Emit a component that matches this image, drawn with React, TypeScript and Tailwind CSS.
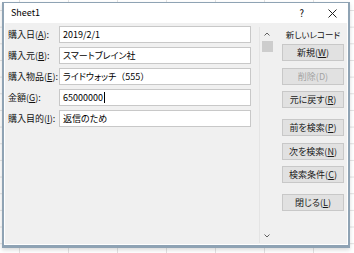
import React from "react";

const font = {
  fontFamily: '"Noto Sans CJK JP", "Noto Sans", sans-serif',
  fontFeatureSettings: '"palt"',
};

type Field = { label: string; key: string; value: React.ReactNode; caret?: boolean };

const fields: Field[] = [
  { label: "購入日", key: "A", value: "2019/2/1" },
  { label: "購入元", key: "B", value: "スマートブレイン社" },
  {
    label: "購入物品",
    key: "E",
    value: (
      <>
        ライドウォッチ
        <span className="[font-feature-settings:normal]">（555）</span>
      </>
    ),
  },
  { label: "金額", key: "G", value: "65000000", caret: true },
  { label: "購入目的", key: "I", value: "返信のため" },
];

function Btn({
  label,
  k,
  disabled,
  className,
}: {
  label: string;
  k: string;
  disabled?: boolean;
  className?: string;
}) {
  return (
    <div
      className={`flex h-[17px] w-[62px] items-center justify-center whitespace-nowrap border border-[#c8c8c8] bg-[#e1e1e1] text-[9px] leading-none ${
        disabled ? "text-[#a3a3a3]" : "text-[#1a1a1a]"
      } ${className ?? ""}`}
    >
      {label}(
      {disabled ? k : <span className="underline underline-offset-1">{k}</span>})
    </div>
  );
}

export default function App() {
  return (
    <div
      className="h-[253px] w-[354px] overflow-hidden bg-white bg-[image:linear-gradient(to_right,#e2e2e2_1px,transparent_1px),linear-gradient(to_bottom,#e2e2e2_1px,transparent_1px)] bg-[length:49px_16.67px] bg-[position:19px_10px] pt-[2px] pl-[2px]"
      style={font}
    >
      <div className="h-[246px] w-[348px] border-t border-r-2 border-b-[3px] border-l-2 border-[#8fa3b4] shadow-[0_2px_4px_rgba(0,0,0,0.15)]">
        <div className="flex h-full flex-col border-r border-b border-l border-white">
          {/* title bar */}
          <div className="flex h-[20px] items-center bg-white pl-[6px] text-[9px] text-black">
            <span>Sheet1</span>
            <span className="ml-auto mr-[24px] text-[9.5px]">?</span>
            <svg width="9" height="9" viewBox="0 0 9 9" className="mr-[10px]">
              <path d="M0.5 0.5 L8.5 8.5 M8.5 0.5 L0.5 8.5" stroke="#222" strokeWidth="1" />
            </svg>
          </div>

          {/* body */}
          <div className="flex flex-1 bg-[#f0f0f0] pl-[3px]">
            <div className="flex flex-col gap-[4px] pt-[3px]">
              {fields.map((f) => (
                <div key={f.key} className="flex h-[17px] items-center">
                  <div className="w-[51px] shrink-0 whitespace-nowrap text-[9px] text-[#111]">
                    {f.label}(<span className="underline underline-offset-1">{f.key}</span>):
                  </div>
                  <div className="flex h-[17px] w-[192px] items-center whitespace-nowrap border border-[#c8c8c8] bg-white pl-[3px] text-[9px] text-black">
                    {f.value}
                    {f.caret && <span className="ml-[1px] h-[11px] w-px bg-black" />}
                  </div>
                </div>
              ))}
            </div>

            {/* scrollbar */}
            <div className="mt-[4px] ml-[8px] flex h-[216px] w-[15px] flex-col items-center border-l border-[#e4e4e4]">
              <div className="flex h-[14px] items-center justify-center">
                <svg width="6" height="4" viewBox="0 0 6 4">
                  <path d="M0.5 3.5 L3 1 L5.5 3.5" fill="none" stroke="#606060" strokeWidth="1" />
                </svg>
              </div>
              <div className="h-[11px] w-[11px] bg-[#cdcdcd]" />
              <div className="mt-auto flex h-[14px] items-center justify-center">
                <svg width="6" height="4" viewBox="0 0 6 4">
                  <path d="M0.5 0.5 L3 3 L5.5 0.5" fill="none" stroke="#606060" strokeWidth="1" />
                </svg>
              </div>
            </div>

            {/* buttons */}
            <div className="ml-[8px] flex w-[62px] flex-col">
              <div className="mt-[5px] flex h-[12px] items-center justify-center whitespace-nowrap text-[8.5px] text-[#111]">
                新しいレコード
              </div>
              <Btn label="新規" k="W" className="mt-[4px]" />
              <Btn label="削除" k="D" disabled className="mt-[7px]" />
              <Btn label="元に戻す" k="R" className="mt-[6px]" />
              <Btn label="前を検索" k="P" className="mt-[11px]" />
              <Btn label="次を検索" k="N" className="mt-[7px]" />
              <Btn label="検索条件" k="C" className="mt-[6px]" />
              <Btn label="閉じる" k="L" className="mt-[11px]" />
            </div>
          </div>
        </div>
      </div>
    </div>
  );
}
